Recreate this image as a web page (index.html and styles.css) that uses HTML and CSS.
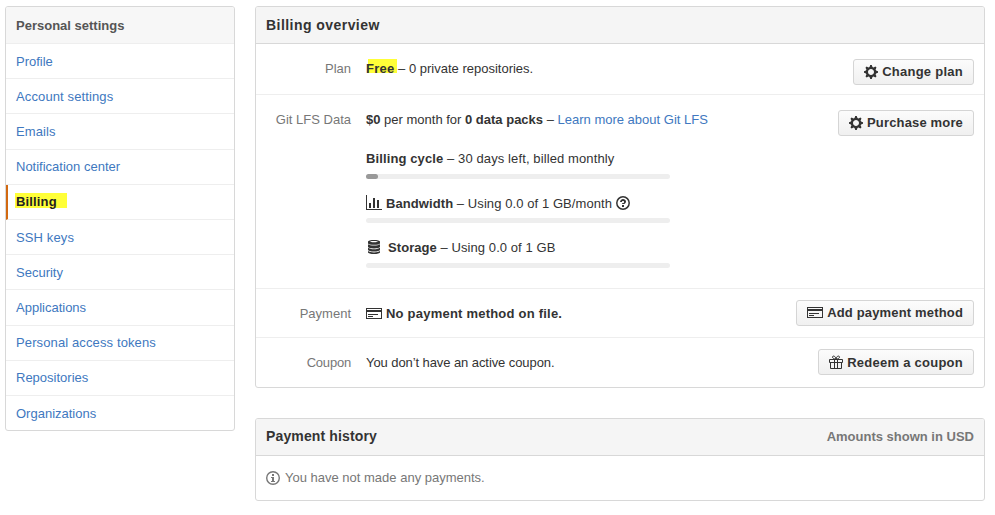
FILE: index.html
```html
<!DOCTYPE html>
<html lang="en">
<head>
<meta charset="utf-8">
<title>Billing</title>
<link rel="stylesheet" href="styles.css">
</head>
<body>
<svg class="defs" width="0" height="0">
  <symbol id="gear" viewBox="0 0 14 16"><path fill-rule="evenodd" d="M14 8.770v-1.600l-1.940-.640-.450-1.090.880-1.840-1.130-1.130-1.810.910-1.090-.450-.690-1.920h-1.600l-.630 1.940-1.110.450-1.840-.880-1.130 1.130.910 1.810-.450 1.090L0 7.230v1.590l1.940.640.450 1.090-.880 1.840 1.130 1.130 1.810-.910 1.090.450.690 1.920h1.590l.630-1.940 1.110-.450 1.840.880 1.130-1.130-.920-1.810.470-1.090L14 8.750v.020zM7 11c-1.660 0-3-1.340-3-3s1.340-3 3-3 3 1.340 3 3-1.340 3-3 3z"/></symbol>
  <symbol id="card" viewBox="0 0 16 16"><path fill-rule="evenodd" d="M0 2h16v11H0zM1 3v.5h14V3zM1 5.500V12h14V5.500zM2 7.500h10v1H2zM2 9.500h5v1H2z"/></symbol>
  <symbol id="gift" viewBox="0 0 14 16"><path fill="none" stroke="currentColor" d="M.5 5.500h13v3H.5zM1.500 8.500v6h11v-6M5.500 5.500v9M8.500 5.500v9M7 5C5 5 3.500 4.300 3.500 3.100 3.500 1.500 6.500 1.500 7 5C7.500 1.500 10.500 1.500 10.500 3.100 10.500 4.300 9 5 7 5"/></symbol>
  <symbol id="graph" viewBox="0 0 16 16"><path d="M0 0h1v14h15v1H0zM3 8h2v5H3zM7 3h2v10H7zM11 5h2v8h-2z"/></symbol>
  <symbol id="database" viewBox="0 0 12 16"><path fill-rule="evenodd" d="M6 1C2.700 1 0 1.600 0 2.500v1.800c0 1 2.700 1.500 6 1.500s6-.5 6-1.500V2.500C12 1.600 9.300 1 6 1zM6 1.900c2.300 0 4 .3 4 .7s-1.700.7-4 .7-4-.3-4-.7.700-.7 4-.7zM0 5.200c1 .9 3.300 1.400 6 1.400s5-.5 6-1.400v2.600c0 1-2.700 1.600-6 1.600S0 8.800 0 7.800zM0 8.700c1 .9 3.300 1.500 6 1.500s5-.6 6-1.500v2.400c0 .9-2.700 1.500-6 1.500s-6-.6-6-1.500zM0 12c1 .9 3.300 1.400 6 1.400s5-.5 6-1.400v1.500c0 .9-2.700 1.500-6 1.500s-6-.6-6-1.500z"/></symbol>
  <symbol id="question" viewBox="0 0 14 16"><circle cx="7" cy="8" r="6.200" fill="none" stroke="currentColor" stroke-width="1.500"/><path d="M6 10h2v2H6zM10 6.500C10 8.640 8 9 8 9H6c0-.55.45-1 1-1h.5c.28 0 .5-.22.5-.5v-1c0-.28-.22-.5-.5-.5h-1c-.28 0-.5.22-.5.5V7H4c0-1.500 1.500-3 3-3s3 1 3 2.500z"/></symbol>
  <symbol id="info" viewBox="0 0 14 16"><circle cx="7" cy="8" r="6.300" fill="none" stroke="currentColor" stroke-width="1.400"/><path d="M6 4h2v2H6zM5 7h3v4h1v1H5v-1h1V8H5z"/></symbol>
</svg>
<div class="page">
  <nav class="menu">
    <h3 class="menu-heading">Personal settings</h3>
    <a class="menu-item">Profile</a>
    <a class="menu-item wide">Account settings</a>
    <a class="menu-item wide">Emails</a>
    <a class="menu-item">Notification center</a>
    <a class="menu-item selected"><span class="mark">Billing</span></a>
    <a class="menu-item wide">SSH keys</a>
    <a class="menu-item">Security</a>
    <a class="menu-item">Applications</a>
    <a class="menu-item wide">Personal access tokens</a>
    <a class="menu-item">Repositories</a>
    <a class="menu-item">Organizations</a>
  </nav>
  <main class="content">
    <section class="box">
      <h3 class="box-heading spaced">Billing overview</h3>
      <div class="row row-plan">
        <div class="label">Plan</div>
        <div class="info"><b class="mark-free">Free</b> – 0 private repositories.</div>
        <button class="btn roomy"><svg class="icon w14"><use href="#gear"/></svg><span>Change plan</span></button>
      </div>
      <div class="row row-data">
        <div class="label">Git LFS Data</div>
        <div class="info">
          <p class="line cost"><b>$0</b> per month for <b>0 data packs</b> – <a>Learn more about Git LFS</a></p>
          <p class="line cycle"><b>Billing cycle</b> – 30 days left, billed monthly</p>
          <div class="bar"><div class="fill"></div></div>
          <p class="line bandwidth"><svg class="icon w16"><use href="#graph"/></svg><span><b>Bandwidth</b> – Using 0.0 of 1 GB/month</span><svg class="icon w14"><use href="#question"/></svg></p>
          <div class="bar"></div>
          <p class="line storage"><svg class="icon w12"><use href="#database"/></svg><span><b>Storage</b> – Using 0.0 of 1 GB</span></p>
          <div class="bar"></div>
        </div>
        <button class="btn"><svg class="icon w14"><use href="#gear"/></svg><span>Purchase more</span></button>
      </div>
      <div class="row row-payment">
        <div class="label">Payment</div>
        <div class="info line"><svg class="icon w16"><use href="#card"/></svg><b>No payment method on file.</b></div>
        <button class="btn"><svg class="icon w16"><use href="#card"/></svg><span>Add payment method</span></button>
      </div>
      <div class="row row-coupon">
        <div class="label">Coupon</div>
        <div class="info">You don’t have an active coupon.</div>
        <button class="btn roomy"><svg class="icon w14"><use href="#gift"/></svg><span>Redeem a coupon</span></button>
      </div>
    </section>
    <section class="box history">
      <h3 class="box-heading">Payment history <span class="currency">Amounts shown in USD</span></h3>
      <div class="empty"><svg class="icon w14"><use href="#info"/></svg><span>You have not made any payments.</span></div>
    </section>
  </main>
</div>
</body>
</html>
```
FILE: styles.css
```css
* { box-sizing: border-box; }
body { margin: 0; background: #fff; color: #333; font: 13px/18px "Liberation Sans", Arial, sans-serif; }
.defs { display: block; }
h3, p { margin: 0; }
a { color: #4078c0; }
.page { display: flex; align-items: flex-start; gap: 20px; padding: 6px 10px 0 5px; }
.menu { width: 230px; height: 425px; border: 1px solid #d8d8d8; border-radius: 3px; overflow: hidden; }
.menu-heading { height: 37px; padding: 10px 10px 0; background: #f7f7f7; border-bottom: 1px solid #eee; color: #555; font-size: 13px; line-height: 18px; }
.menu-item { display: block; height: 35.2px; padding: 8.600px 10px 0; border-bottom: 1px solid #eee; }
.menu-item:last-child { padding-top: 9.500px; border-bottom: 0; }
.menu-item.wide { letter-spacing: .12px; }
.menu-item.selected { padding-left: 8px; border-left: 2px solid #d26911; color: #222; font-weight: bold; letter-spacing: .15px; }
.mark { display: inline-block; height: 15px; margin-left: -1px; padding: 0 10px 0 1px; line-height: 17px; background: #ffff38; }
.content { flex: 1; }
.box { border: 1px solid #d8d8d8; border-radius: 3px; overflow: hidden; }
.box-heading { display: flex; justify-content: space-between; height: 37px; padding: 9px 10px 0; background: #f5f5f5; border-bottom: 1px solid #d8d8d8; font-size: 14px; line-height: 18px; letter-spacing: .13px; }
.box-heading.spaced { letter-spacing: .45px; }
.history .box-heading { padding-top: 8px; }
.currency { padding-top: 1px; color: #777; font-size: 13px; letter-spacing: 0; }
.row { display: flex; align-items: flex-start; padding: 0 10px; border-bottom: 1px solid #eee; }
.row:last-child { border-bottom: 0; }
.label { width: 85px; margin-right: 15px; color: #777; text-align: right; }
.info { flex: 1; }
.line, .empty { display: flex; align-items: center; gap: 4px; height: 18px; }
.btn { display: flex; align-items: center; gap: 4px; height: 26px; padding: 0 10px; border: 1px solid #d5d5d5; border-radius: 3px; background: linear-gradient(#fcfcfc, #f0f0f0); color: #333; font: bold 13px/18px "Liberation Sans", Arial, sans-serif; letter-spacing: .16px; }
.btn.roomy { letter-spacing: .26px; }
.row-plan { height: 51px; }
.row-plan .label, .row-plan .info { padding-top: 16px; }
.row-plan .btn { margin-top: 15px; }
.mark-free { padding: 2px 3px 0 0; margin-right: -3px; background: linear-gradient(#ffff38, #ffff38) 2px 0 / 100% 14px no-repeat; letter-spacing: .25px; }
.row-data { height: 194px; }
.row-data .label, .row-data > .info { padding-top: 16px; }
.row-data .btn { margin-top: 15px; }
.line.cost, .line.cycle { display: block; }
.line.cost { margin-bottom: 21px; }
.line.cycle { margin-bottom: 6px; letter-spacing: .11px; }
.line.bandwidth { margin: 15px 0 6px; letter-spacing: .08px; }
.line.storage { margin: 15px 0 7px; padding-left: 2px; letter-spacing: .07px; }
.line.bandwidth span, .line.storage span { padding-top: 2px; }
.storage .icon { margin-right: 4px; }
.bar { width: 304px; height: 5px; border-radius: 3px; background: #eee; }
.fill { width: 12px; height: 5px; border-radius: 3px; background: #999; }
.row-payment { height: 49px; }
.row-payment .label, .row-payment .info { margin-top: 16px; }
.row-payment b { letter-spacing: .22px; }
.row-payment .btn, .row-coupon .btn { margin-top: 11px; }
.row-coupon { height: 49px; }
.row-coupon .label, .row-coupon .info { padding-top: 16px; }
.row-coupon .label { letter-spacing: -.2px; }
.row-coupon .info { letter-spacing: -.08px; }
.row-coupon .btn span { padding-top: 2px; }
.history { margin-top: 30px; height: 83px; }
.empty { margin: 13px 10px; gap: 5px; color: #777; }
.icon { display: block; flex: none; height: 16px; fill: currentColor; }
.w12 { width: 12px; }
.w14 { width: 14px; }
.w16 { width: 16px; }
.info .w16 { shape-rendering: crispEdges; }
.row-payment .w16 { shape-rendering: crispEdges; }
```
